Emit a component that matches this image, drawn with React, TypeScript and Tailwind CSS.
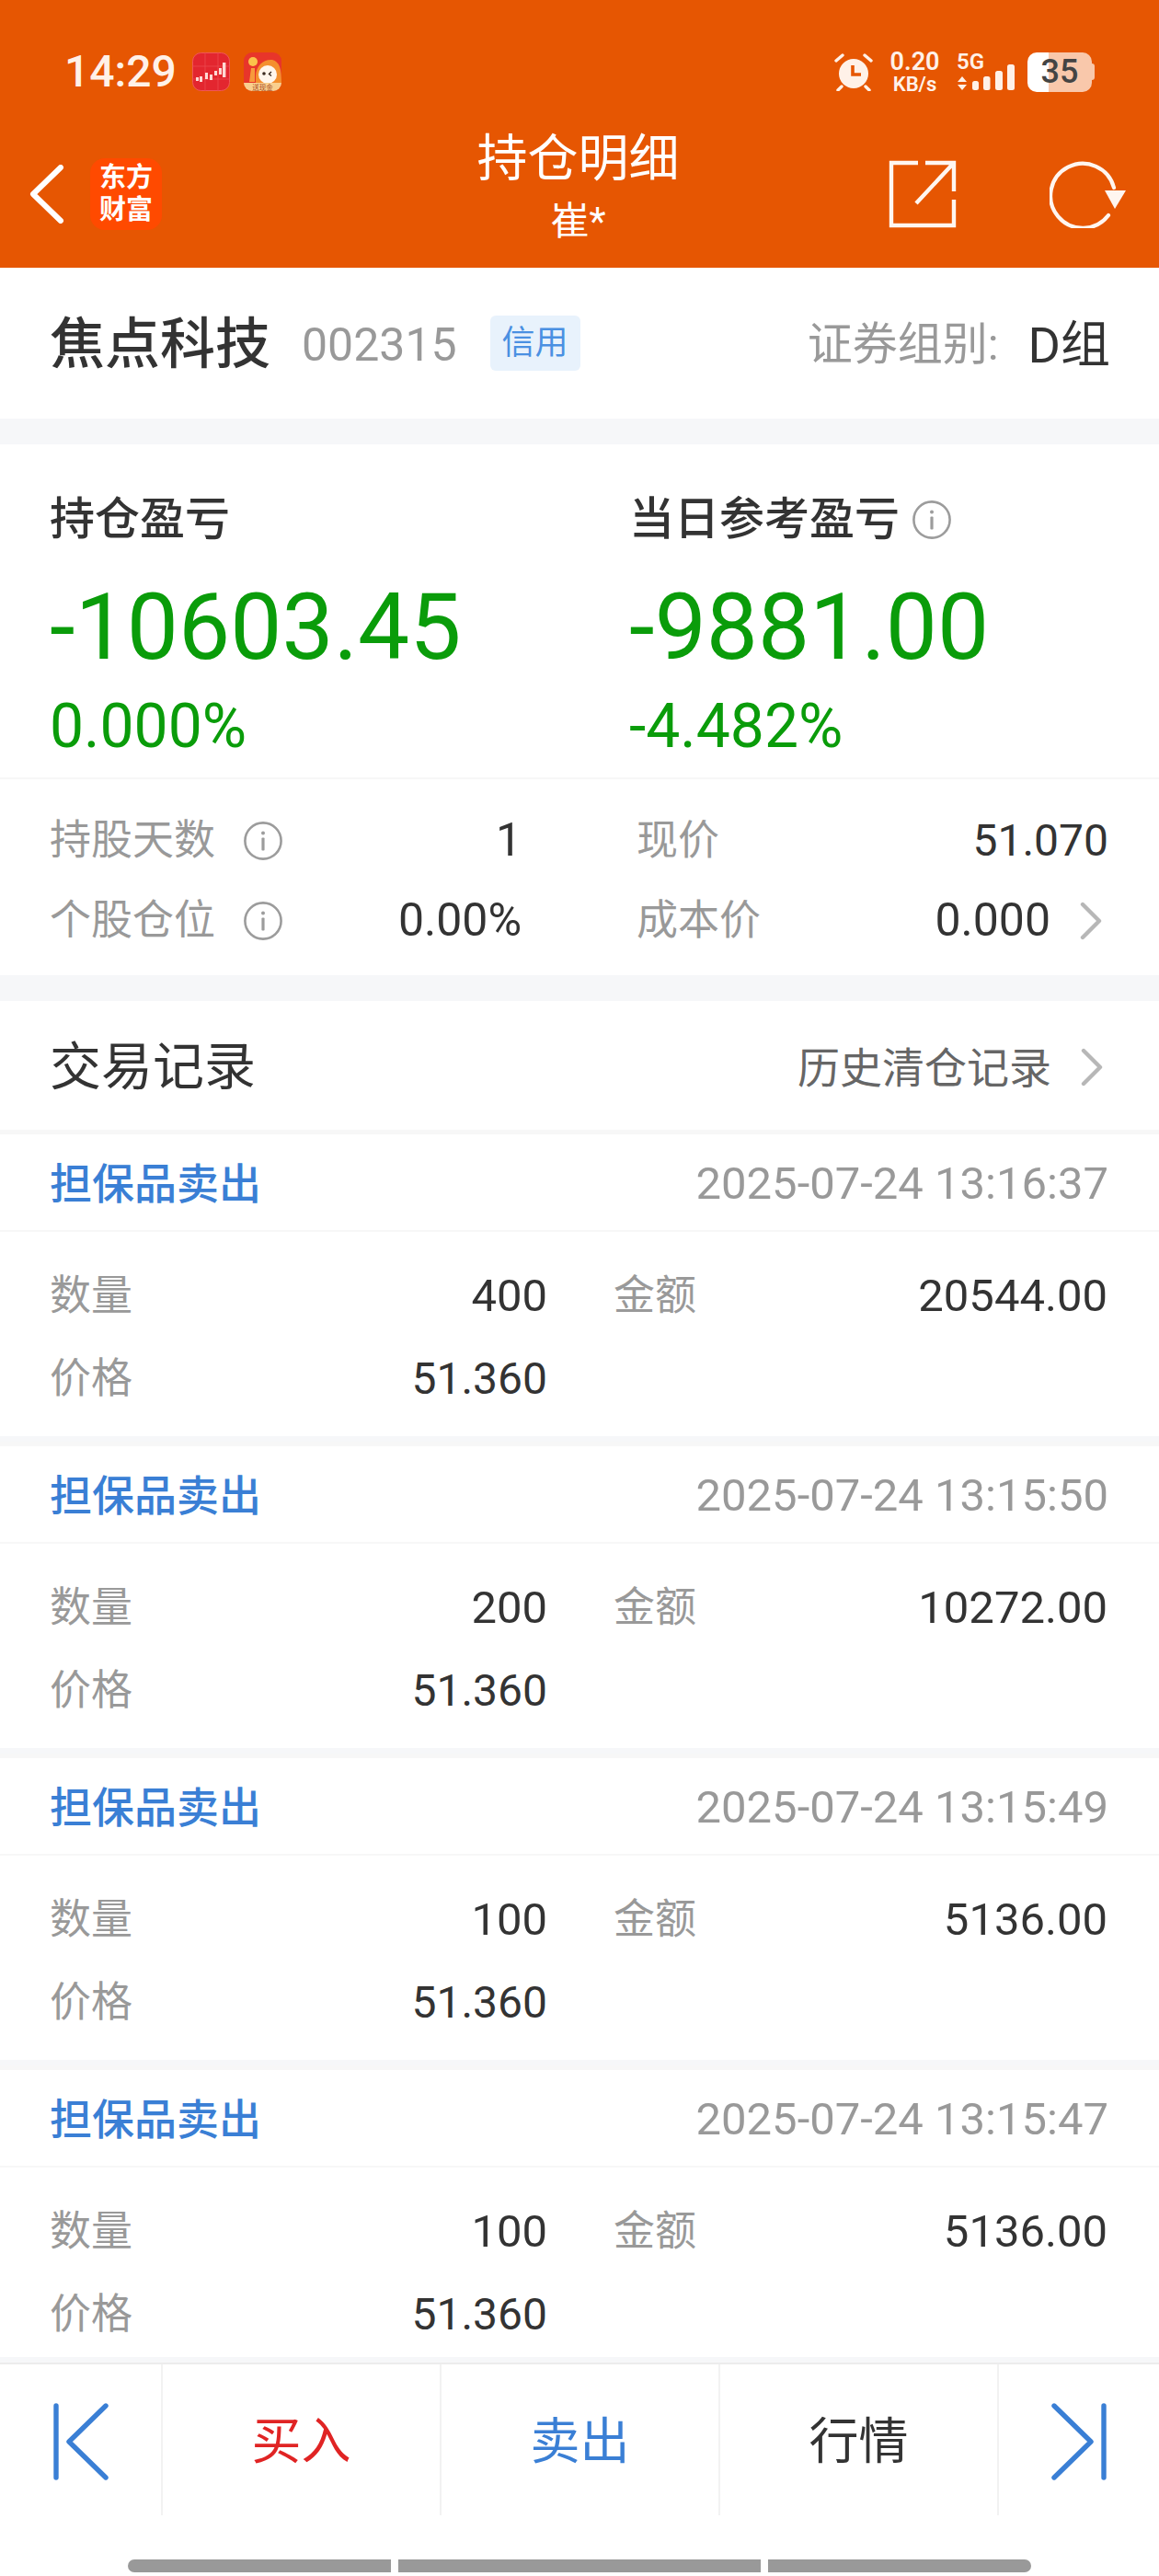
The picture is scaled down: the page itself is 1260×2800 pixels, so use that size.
import React from "react";

const InfoIcon = () => (
  <svg width="42" height="42" viewBox="0 0 42 42" className="shrink-0">
    <circle cx="21" cy="21" r="19.6" fill="none" stroke="#9c9c9c" strokeWidth="2.6" />
    <circle cx="21" cy="12.5" r="2" fill="#9c9c9c" />
    <rect x="19.4" y="17.5" width="3.2" height="14" rx="1" fill="#9c9c9c" />
  </svg>
);

const Chevron = () => (
  <svg width="24" height="42" viewBox="0 0 24 42" className="shrink-0">
    <path d="M3 3 L21 21 L3 39" fill="none" stroke="#b7b7b7" strokeWidth="4.4" strokeLinecap="round" strokeLinejoin="round" />
  </svg>
);

const StockApp = () => (
  <svg width="41" height="42" viewBox="0 0 41 42" className="shrink-0">
    <rect x="0.5" y="0.5" width="40" height="41" rx="9" fill="#e3262f" stroke="#f0565a" />
    <path d="M0 15H41M0 29H41M14 0V42M28 0V42" stroke="#ec4a4f" strokeWidth="0.8" />
    <g fill="#ffd9d4">
      <rect x="4" y="27" width="3" height="4" />
      <rect x="8" y="26" width="3" height="6" />
      <rect x="14" y="22" width="3" height="7" />
      <rect x="19" y="24" width="3" height="6" />
      <rect x="24" y="20" width="3" height="5" />
      <rect x="29" y="17" width="3" height="7" />
      <rect x="33" y="11" width="3.4" height="16" />
    </g>
  </svg>
);

const MonkeyApp = () => (
  <svg width="41" height="42" viewBox="0 0 41 42" className="shrink-0">
    <rect x="0" y="0" width="41" height="42" rx="9" fill="#e8352a" />
    <circle cx="10" cy="10" r="5" fill="#fbc24a" />
    <path d="M8 17h4v15H6z" fill="#f79a3c" />
    <path d="M13 26 C13 14 22 7 31 8 C39 10 41 18 41 33 L13 33Z" fill="#f48f2e" />
    <ellipse cx="26" cy="24" rx="10" ry="10" fill="#fff6ec" />
    <circle cx="22" cy="23" r="1.8" fill="#3a2a20" />
    <path d="M30 21l-2.5 2.5 2.5 2" fill="none" stroke="#3a2a20" strokeWidth="1.4" />
    <path d="M0 33H41V33a9 9 0 0 1-9 9H9a9 9 0 0 1-9-9Z" fill="#f9cf8e" />
    <text x="20.5" y="40.5" textAnchor="middle" fontSize="7.5" fill="#a8481c" fontFamily="'Noto Sans CJK SC',sans-serif">送现金</text>
  </svg>
);

const Alarm = () => (
  <svg width="42" height="42" viewBox="0 0 42 42" className="shrink-0">
    <circle cx="21" cy="23" r="16" fill="#fff1e8" />
    <path d="M2 9 L9 3 M40 9 L33 3 M8 37 L4 41 M34 37 L38 41" stroke="#fff1e8" strokeWidth="3.4" strokeLinecap="round" />
    <path d="M20 14 V24 H29" fill="none" stroke="#e65602" strokeWidth="3.6" />
  </svg>
);

const Signal = () => (
  <div className="relative w-[64px] h-[42px] shrink-0">
    <svg width="64" height="42" viewBox="0 0 64 42" className="absolute left-0 top-0">
      <path d="M6 26 L11 32 H1Z M6 41 L1 35 H11Z" fill="#fff1e8" />
      <rect x="17" y="31" width="7" height="10" rx="2.5" fill="#fff1e8" />
      <rect x="29" y="26" width="7.5" height="15" rx="2.5" fill="#fff1e8" />
      <rect x="42" y="20" width="8" height="21" rx="2.5" fill="#fff1e8" />
      <rect x="55" y="13" width="8" height="28" rx="2.5" fill="#fff1e8" />
    </svg>
    <span className="absolute left-0 top-0 text-[24px] leading-[20px] font-semibold text-[#fff1e8]">5G</span>
  </div>
);

const StatusBar = () => (
  <div className="flex items-center justify-between h-[42px] mt-[57px] pl-[70px] pr-[70px]">
    <div className="flex items-center">
      <span className="text-[48px] leading-[42px] font-medium text-[#fff1e8] w-[139px]">14:29</span>
      <StockApp />
      <span className="w-[15px]" />
      <MonkeyApp />
    </div>
    <div className="flex items-center">
      <Alarm />
      <div className="flex flex-col items-center w-[53px] ml-[19px] mr-[19px] text-[#fff1e8] font-semibold">
        <span className="text-[27px] leading-[28px]">0.20</span>
        <span className="text-[22px] leading-[22px]">KB/s</span>
      </div>
      <Signal />
      <div className="flex items-center ml-[13px]">
        <div className="w-[70px] h-[43px] rounded-[10px] bg-[linear-gradient(90deg,#ffffff_33%,#f9c8ab_33%)] flex items-center justify-center text-[36px] font-medium text-[#444444]">
          35
        </div>
        <div className="w-[3px] h-[18px] rounded-r-[3px] bg-[#f9c8ab]" />
      </div>
    </div>
  </div>
);

const NavBar = () => (
  <div className="grid grid-cols-[1fr_auto_1fr] items-center mt-[58px] pl-[32px] pr-[35px]">
    <div className="flex items-center">
      <svg width="38" height="64" viewBox="0 0 38 64">
        <path d="M34 3 L4 32 L34 61" fill="none" stroke="#ffffff" strokeWidth="6" strokeLinecap="round" strokeLinejoin="round" />
      </svg>
      <div className="ml-[28px] w-[78px] h-[78px] rounded-[16px] bg-[#ff4a00] flex flex-col items-center justify-center text-white text-[29px] leading-[35px] font-bold">
        <span>东方</span>
        <span>财富</span>
      </div>
    </div>
    <div className="flex flex-col items-center text-white -mt-[16px]">
      <span className="text-[55px] leading-[62px]">持仓明细</span>
      <span className="text-[42px] leading-[48px] mt-[14px]">崔*</span>
    </div>
    <div className="flex items-center justify-end">
      <svg width="74" height="74" viewBox="0 0 74 74">
        <path d="M32 3 H3 V71 H71 V43 M40 3 H71 V34 M71 3 L30 47" fill="none" stroke="#fff6f0" strokeWidth="4.4" />
      </svg>
      <svg width="84" height="74" viewBox="0 0 84 74" className="ml-[101px]">
        <path d="M64 60 A35 35 0 1 1 70 30" fill="none" stroke="#fff6f0" strokeWidth="4.2" strokeLinecap="round" />
        <path d="M60 33 H83 L71 53Z" fill="#fff6f0" />
      </svg>
    </div>
  </div>
);

const StockRow = () => (
  <div className="flex items-center justify-between h-[164px] bg-white pl-[54px] pr-[53px] pt-[4px]">
    <div className="flex items-center">
      <span className="text-[60px] font-medium text-[#333333]">焦点科技</span>
      <span className="ml-[34px] text-[50px] text-[#999999]">002315</span>
      <span className="ml-[36px] w-[98px] h-[60px] -mt-[4px] rounded-[6px] bg-[#e8f2fc] text-[#4a90e2] text-[36px] flex items-center justify-center">信用</span>
    </div>
    <div className="flex items-center">
      <span className="text-[#999999] text-[49px]">证券组别:</span>
      <span className="text-[#333333] text-[54px] ml-[32px]">D组</span>
    </div>
  </div>
);

const PnlColumn = ({ title, value, pct, info, cls }: { title: string; value: string; pct: string; info?: boolean; cls: string }) => (
  <div className={cls}>
    <div className="flex items-center h-[56px]">
      <span className="text-[49px] leading-[56px] font-medium text-[#333333]">{title}</span>
      {info && <span className="ml-[14px]"><InfoIcon /></span>}
    </div>
    <div className="text-[100px] leading-[116px] text-[#0a9c0a] mt-[31px]">{value}</div>
    <div className="text-[66px] leading-[76px] text-[#0a9c0a] mt-[12px]">{pct}</div>
  </div>
);

const Summary = () => (
  <div className="bg-white h-[577px] flex flex-col">
    <div className="flex h-[364px] pt-[54px] pl-[54px] border-b-2 border-[#f7f7f7]">
      <PnlColumn cls="w-[630px]" title="持仓盈亏" value="-10603.45" pct="0.000%" />
      <PnlColumn cls="flex-1" title="当日参考盈亏" value="-9881.00" pct="-4.482%" info />
    </div>
    <div className="grid grid-cols-[513px_513px] gap-x-[125px] grid-rows-[87px_87px] pl-[54px] pt-[23px]">
      <div className="flex items-center">
        <span className="text-[45px] text-[#999999]">持股天数</span>
        <span className="ml-[31px]"><InfoIcon /></span>
        <span className="ml-auto text-[50px] text-[#333333]">1</span>
      </div>
      <div className="flex items-center">
        <span className="text-[45px] text-[#999999]">现价</span>
        <span className="ml-auto text-[48px] text-[#333333]">51.070</span>
      </div>
      <div className="flex items-center">
        <span className="text-[45px] text-[#999999]">个股仓位</span>
        <span className="ml-[31px]"><InfoIcon /></span>
        <span className="ml-auto text-[50px] text-[#333333]">0.00%</span>
      </div>
      <div className="flex items-center">
        <span className="text-[45px] text-[#999999]">成本价</span>
        <span className="ml-auto text-[50px] text-[#333333]">0.000</span>
        <span className="ml-[32px] mr-[7px]"><Chevron /></span>
      </div>
    </div>
  </div>
);

const SectionHead = () => (
  <div className="bg-white h-[140px] flex items-center justify-between pl-[54px] pr-[61px] pt-[4px]">
    <span className="text-[56px] text-[#333333]">交易记录</span>
    <div className="flex items-center">
      <span className="text-[46px] text-[#666666] mt-[2px]">历史清仓记录</span>
      <span className="ml-[32px]"><Chevron /></span>
    </div>
  </div>
);

const Record = ({ time, qty, amount }: { time: string; qty: string; amount: string }) => (
  <div className="bg-white border-t-[5px] border-[#f7f7f7]">
    <div className="h-[106px] flex items-center justify-between pl-[54px] pr-[55px] pt-[4px] border-b-2 border-[#f7f7f7]">
      <span className="text-[46px] font-medium text-[#3a7fd5]">担保品卖出</span>
      <span className="text-[49px] text-[#999999]">{time}</span>
    </div>
    <div className="grid grid-cols-[541px_537px] gap-x-[72px] grid-rows-[90px_90px] pl-[54px] pt-[25px] h-[222px]">
      <div className="flex items-center justify-between">
        <span className="text-[45px] text-[#999999]">数量</span>
        <span className="text-[49px] text-[#333333]">{qty}</span>
      </div>
      <div className="flex items-center justify-between">
        <span className="text-[45px] text-[#999999]">金额</span>
        <span className="text-[49px] text-[#333333]">{amount}</span>
      </div>
      <div className="flex items-center justify-between">
        <span className="text-[45px] text-[#999999]">价格</span>
        <span className="text-[48px] text-[#333333]">51.360</span>
      </div>
    </div>
    <div className="h-[6px] bg-[#f6f7f9]" />
  </div>
);

const BottomBar = () => (
  <div className="bg-white border-t-2 border-[#ececec]">
    <div className="grid grid-cols-[175px_303px_303px_303px_176px] h-[164px]">
      <div className="flex items-center justify-center pt-[3px]">
        <svg width="60" height="84" viewBox="0 0 60 84">
          <path d="M3 3 V81" stroke="#3a7fd5" strokeWidth="5.4" strokeLinecap="round" />
          <path d="M57 3 L17 42 L57 81" fill="none" stroke="#3a7fd5" strokeWidth="5.4" strokeLinecap="round" strokeLinejoin="round" />
        </svg>
      </div>
      <div className="border-l-2 border-[#f2f2f2] flex items-center justify-center pt-[4px] text-[54px] text-[#e02424]">买入</div>
      <div className="border-l-2 border-[#f2f2f2] flex items-center justify-center pt-[4px] text-[54px] text-[#3a7fd5]">卖出</div>
      <div className="border-l-2 border-[#f2f2f2] flex items-center justify-center pt-[4px] text-[54px] text-[#333333]">行情</div>
      <div className="border-l-2 border-[#f2f2f2] flex items-center justify-center pt-[3px]">
        <svg width="60" height="84" viewBox="0 0 60 84">
          <path d="M57 3 V81" stroke="#3a7fd5" strokeWidth="5.4" strokeLinecap="round" />
          <path d="M3 3 L43 42 L3 81" fill="none" stroke="#3a7fd5" strokeWidth="5.4" strokeLinecap="round" strokeLinejoin="round" />
        </svg>
      </div>
    </div>
    <div className="h-[66px] pt-[48px] pl-[139px] flex gap-[8px]">
      <div className="w-[286px] h-[14px] bg-[#999999] rounded-l-[7px]" />
      <div className="w-[394px] h-[14px] bg-[#999999]" />
      <div className="w-[286px] h-[14px] bg-[#999999] rounded-r-[7px]" />
    </div>
  </div>
);

export default function App() {
  return (
    <div className="w-[1260px] h-[2800px] flex flex-col bg-[#f6f7f9] overflow-hidden font-['Roboto','Noto_Sans_CJK_SC',sans-serif]">
      <div className="h-[291px] shrink-0 bg-[#e65602] flex flex-col">
        <StatusBar />
        <NavBar />
      </div>
      <StockRow />
      <div className="h-[28px] shrink-0" />
      <Summary />
      <div className="h-[28px] shrink-0" />
      <SectionHead />
      <div className="flex-1 min-h-0 overflow-hidden">
        <Record time="2025-07-24 13:16:37" qty="400" amount="20544.00" />
        <Record time="2025-07-24 13:15:50" qty="200" amount="10272.00" />
        <Record time="2025-07-24 13:15:49" qty="100" amount="5136.00" />
        <Record time="2025-07-24 13:15:47" qty="100" amount="5136.00" />
      </div>
      <div className="h-[6px] shrink-0 bg-[#f6f7f9]" />
      <BottomBar />
    </div>
  );
}
